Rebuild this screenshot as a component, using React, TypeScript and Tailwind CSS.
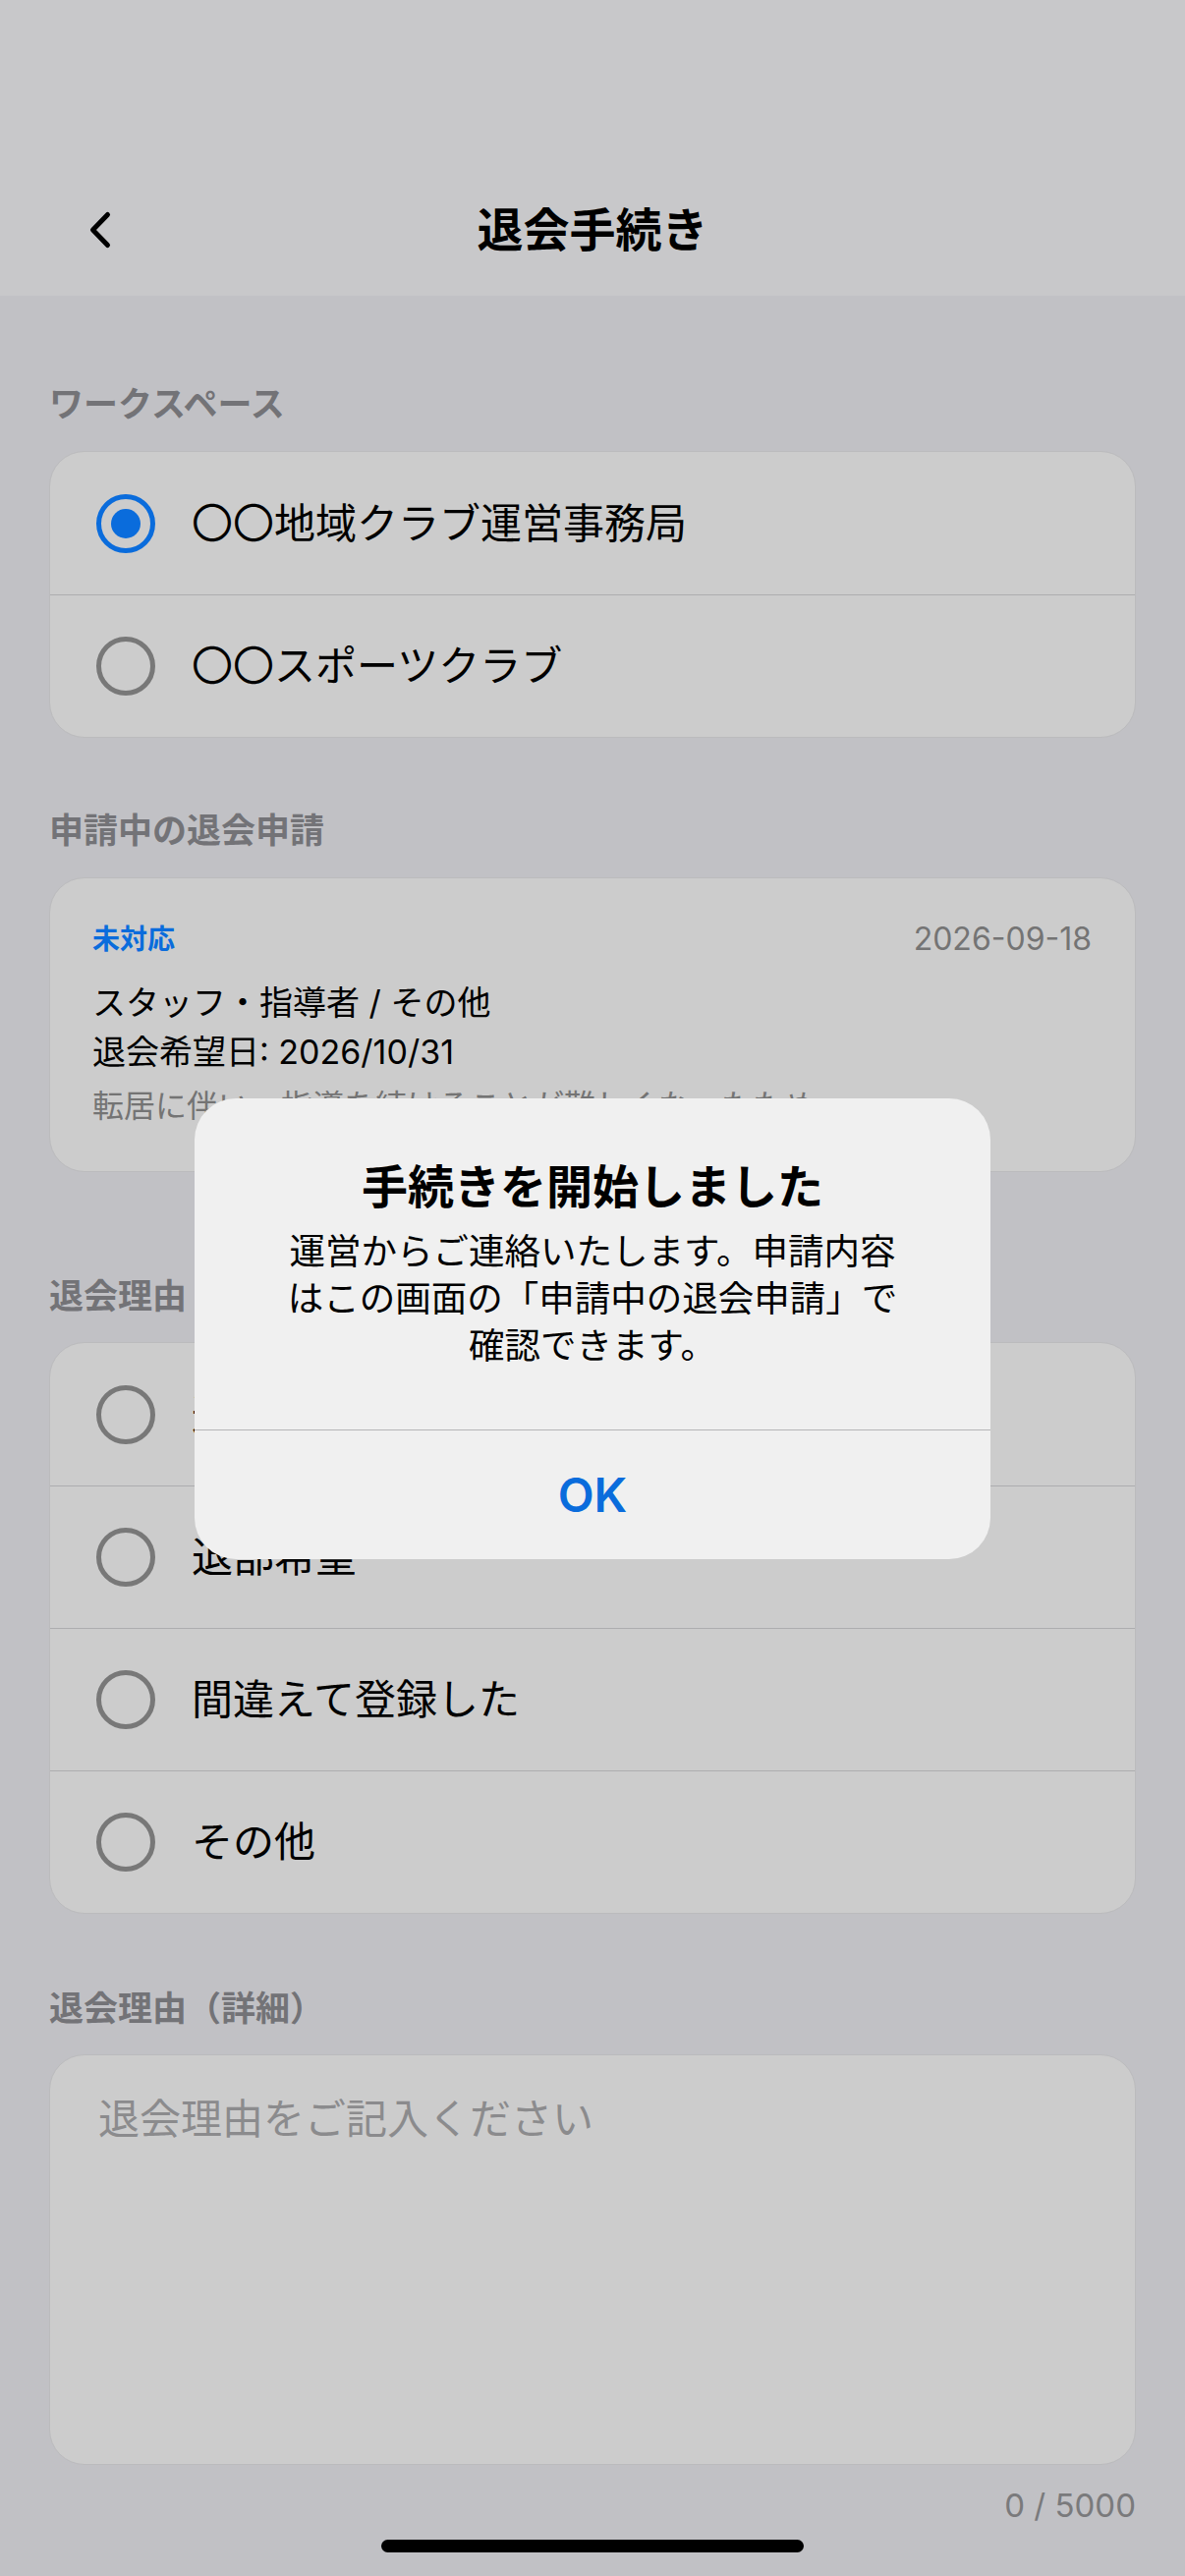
import React from "react";

function Radio({ checked }: { checked?: boolean }) {
  if (checked) {
    return (
      <span className="flex h-[60px] w-[60px] shrink-0 items-center justify-center rounded-full border-[5px] border-[#0a6cdc]">
        <span className="h-[30px] w-[30px] rounded-full bg-[#0a6cdc]" />
      </span>
    );
  }
  return <span className="h-[60px] w-[60px] shrink-0 rounded-full border-[5px] border-[#787878]" />;
}

function OptionRow({ label, checked, first }: { label: string; checked?: boolean; first?: boolean }) {
  return (
    <div className={`flex h-[145px] items-center gap-[37px] pl-[47px] ${first ? "" : "border-t border-[#adadaf]"}`}>
      <Radio checked={checked} />
      <span className="text-[42px] leading-[50px] text-black">{label}</span>
    </div>
  );
}

export default function App() {
  return (
    <div className="relative h-[2622px] w-[1206px] overflow-hidden bg-[#c1c1c5] font-['Inter','Noto_Sans_CJK_JP',sans-serif]">
      {/* Header */}
      <header className="flex h-[301px] flex-col justify-end bg-[#c8c8ca] px-[50px] pb-[39px]">
        <div className="grid h-[56px] grid-cols-[1fr_auto_1fr] items-center">
          <div className="flex items-center">
            <svg className="ml-[40px]" width="24" height="40" viewBox="0 0 24 40" fill="none">
              <path d="M19.5 4.5 L4.5 20 L19.5 35.5" stroke="#000" strokeWidth="5" strokeLinecap="round" strokeLinejoin="round" />
            </svg>
          </div>
          <h1 className="text-[47px] font-bold leading-[56px] text-black">退会手続き</h1>
          <div />
        </div>
      </header>

      <main className="px-[50px]">
        {/* Workspace */}
        <div className="mt-[90px] text-[35px] font-semibold leading-[41px] text-[#737377]">ワークスペース</div>
        <div className="mt-[27px] overflow-hidden rounded-[36px] border border-[#bbbbbd] bg-[#cccccc]">
          <OptionRow label="〇〇地域クラブ運営事務局" checked first />
          <OptionRow label="〇〇スポーツクラブ" />
        </div>

        {/* Pending requests */}
        <div className="mt-[74px] text-[35px] font-semibold leading-[41px] text-[#737377]">申請中の退会申請</div>
        <div className="mt-[27px] h-[300px] overflow-hidden rounded-[36px] border border-[#bbbbbd] bg-[#cccccc] pl-[43px] pr-[44px] pt-[40px]">
          <div className="flex h-[44px] items-center justify-between">
            <span className="text-[28px] font-bold text-[#0a6cdc]">未対応</span>
            <span className="text-[32px] text-[#747474]">2026-09-18</span>
          </div>
          <div className="mt-[18px] text-[34px] leading-[50px] text-black">スタッフ・指導者 / その他</div>
          <div className="text-[34px] leading-[50px] text-black">退会希望日: 2026/10/31</div>
          <div className="mt-[6px] text-[32px] leading-[48px] text-[#747474]">
            転居に伴い、指導を続けることが難しくなったため
          </div>
        </div>

        {/* Reasons */}
        <div className="mt-[106px] text-[35px] font-semibold leading-[41px] text-[#737377]">退会理由</div>
        <div className="mt-[26px] overflow-hidden rounded-[36px] border border-[#bbbbbd] bg-[#cccccc]">
          <OptionRow label="退職・異動のため" first />
          <OptionRow label="退部希望" />
          <OptionRow label="間違えて登録した" />
          <OptionRow label="その他" />
        </div>

        {/* Detail */}
        <div className="mt-[76px] text-[35px] font-semibold leading-[41px] text-[#737377]">退会理由（詳細）</div>
        <div className="mt-[26px] h-[418px] rounded-[36px] border border-[#bbbbbd] bg-[#cccccc] pl-[49px] pt-[40px]">
          <div className="text-[42px] leading-[50px] text-[#8b8b8d]">退会理由をご記入ください</div>
        </div>
        <div className="mt-[21px] text-right text-[33px] leading-[40px] text-[#7a7a7c]">0 / 5000</div>
      </main>

      {/* Alert dialog */}
      <div className="absolute left-[198px] top-[1118px] flex h-[469px] w-[810px] flex-col overflow-hidden rounded-[42px] bg-[#f0f0f0]">
        <div className="flex flex-col items-center pt-[62px] text-center">
          <div className="text-[47px] font-bold leading-[56px] text-black">手続きを開始しました</div>
          <div className="mt-[14px] text-[36.5px] leading-[48px] text-black">
            運営からご連絡いたします。申請内容
            <br />
            はこの画面の「申請中の退会申請」で
            <br />
            確認できます。
          </div>
        </div>
        <div className="mt-auto flex h-[132px] items-center justify-center border-t border-[#b5b5b7]">
          <span className="text-[48px] font-semibold text-[#0a6cdc]">OK</span>
        </div>
      </div>

      {/* Home indicator */}
      <div className="absolute left-[388px] top-[2585px] h-[13px] w-[430px] rounded-full bg-black" />
    </div>
  );
}
